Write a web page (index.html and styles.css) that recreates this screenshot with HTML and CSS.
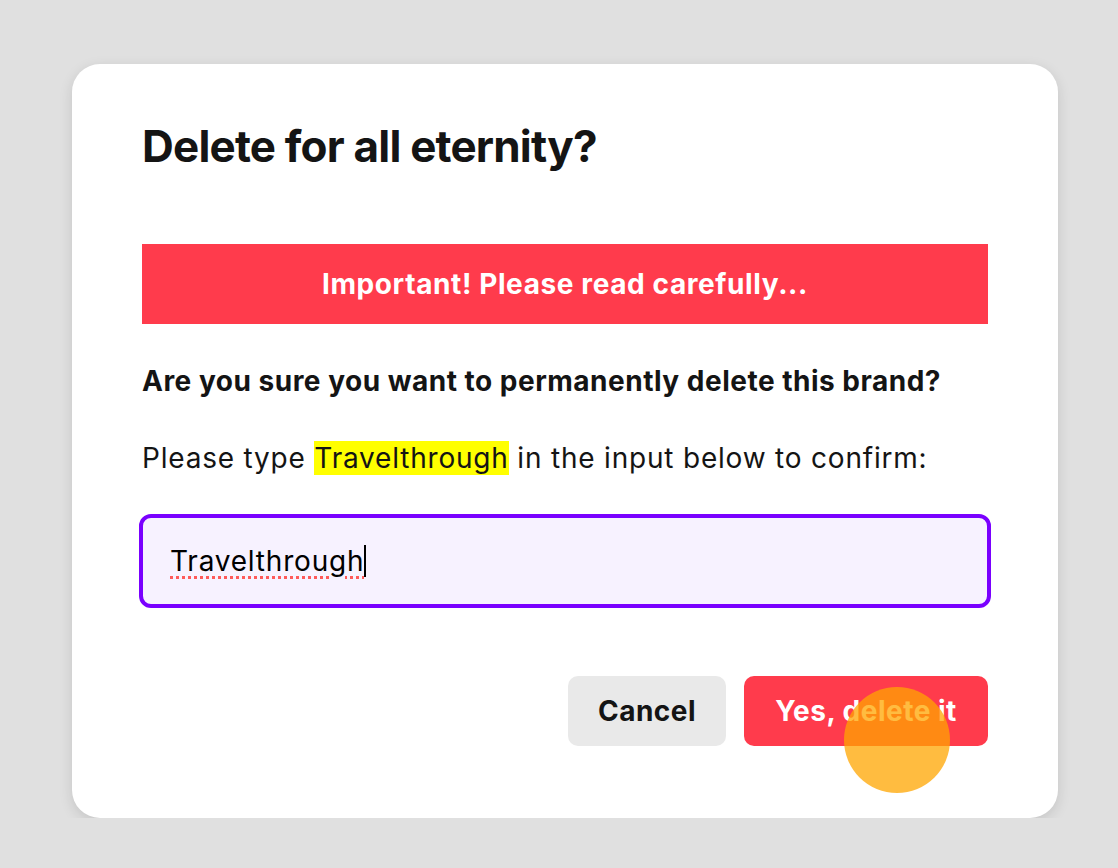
FILE: index.html
```html
<!DOCTYPE html>
<html lang="en">
<head>
    <meta charset="UTF-8">
    <meta name="viewport" content="width=device-width, initial-scale=1.0">
    <title>Delete brand</title>
    <link rel="stylesheet" href="styles.css">
</head>
<body>
    <div class="modal">
        <h1 class="modal-title">Delete for all eternity?</h1>

        <div class="warning-banner">Important! Please read carefully...</div>

        <p class="question">Are you sure you want to permanently delete this brand?</p>
        <p class="instructions">Please type <mark class="brand-name">Travelthrough</mark> in the input below to confirm:</p>

        <div class="confirm-field">
            <span class="typed">Travelthrough</span><span class="caret"></span>
        </div>

        <div class="actions">
            <button class="btn btn-cancel">Cancel</button>
            <div class="delete-wrap">
                <button class="btn btn-delete">Yes, delete it</button>
                <span class="touch-dot"></span>
            </div>
        </div>
    </div>
</body>
</html>
```

FILE: styles.css
```css
body {
    margin: 0;
    background-color: #e0e0e0;
    font-family: Inter, "Liberation Sans", sans-serif;
    color: #141414;
}

.modal {
    width: 986px;
    box-sizing: border-box;
    margin: 64px 0 0 72px;
    padding: 56px 70px 72px;
    background-color: #fff;
    border-radius: 28px;
    box-shadow: 0 4px 14px rgba(0, 0, 0, 0.12);
}

.modal-title {
    margin: 0;
    font-size: 44px;
    line-height: 53px;
    font-weight: 700;
    letter-spacing: -0.8px;
}

.warning-banner {
    margin-top: 71px;
    height: 80px;
    display: flex;
    align-items: center;
    justify-content: center;
    background-color: #ff3b4c;
    color: #fff;
    font-size: 28px;
    font-weight: 700;
    letter-spacing: 0.6px;
}

.question {
    margin: 39px 0 0;
    font-size: 28px;
    font-weight: 700;
    line-height: 36px;
    letter-spacing: 0.5px;
}

.instructions {
    margin: 41px 0 0;
    font-size: 28px;
    line-height: 36px;
    letter-spacing: 0.8px;
}

.brand-name {
    background-color: #ffff00;
    color: #141414;
}

.confirm-field {
    margin: 38px -3px 0;
    height: 94px;
    box-sizing: border-box;
    border: 4px solid #7a00ff;
    border-radius: 12px;
    background-color: #f7f2ff;
    padding-left: 27px;
    display: flex;
    align-items: center;
    font-size: 28px;
    letter-spacing: 0.8px;
    color: #000;
}

.typed {
    text-decoration: underline dotted #ff5a5a;
    text-decoration-thickness: 3px;
    text-underline-offset: 5px;
}

.caret {
    width: 2px;
    height: 32px;
    background-color: #000;
}

.actions {
    margin-top: 68px;
    display: flex;
    justify-content: flex-end;
    gap: 18px;
}

.btn {
    height: 70px;
    border: none;
    border-radius: 10px;
    font-family: inherit;
    font-size: 28px;
    font-weight: 700;
    letter-spacing: 0.5px;
    cursor: pointer;
}

.btn-cancel {
    width: 158px;
    background-color: #e9e9e9;
    color: #141414;
}

.btn-delete {
    width: 244px;
    background-color: #ff3b4c;
    color: #fff;
}

.delete-wrap {
    position: relative;
}

.touch-dot {
    position: absolute;
    left: 100px;
    top: 11px;
    width: 106px;
    height: 106px;
    border-radius: 50%;
    background-color: rgba(255, 165, 0, 0.75);
    pointer-events: none;
}
```
